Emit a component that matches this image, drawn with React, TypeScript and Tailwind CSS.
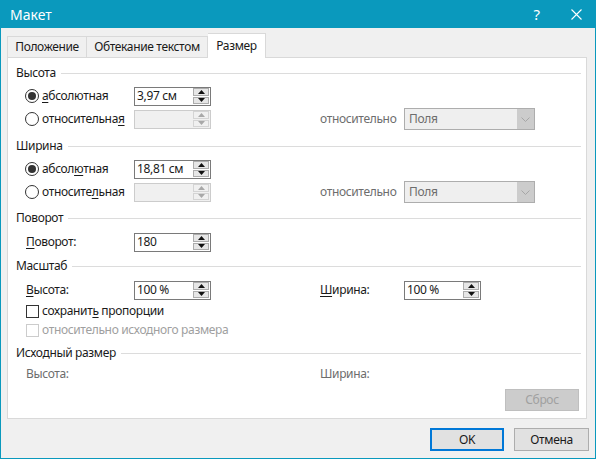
import React from "react";

const U = ({ children }: { children: React.ReactNode }) => (
  <span className="underline decoration-1 underline-offset-[2px]">{children}</span>
);

function Spin({ disabled = false }: { disabled?: boolean }) {
  const fill = disabled ? "#a8a8a8" : "#111";
  const btn = disabled
    ? "bg-[#f0f0f0] border-[#d4d4d4]"
    : "bg-[#e6e6e6] border-[#acacac]";
  return (
    <div className="flex flex-col w-[16px] h-[16px] gap-px">
      <div className={`flex-1 flex items-center justify-center border ${btn}`}>
        <svg width="7" height="4" viewBox="0 0 7 4">
          <path d="M0 4 L3.5 0 L7 4 Z" fill={fill} />
        </svg>
      </div>
      <div className={`flex-1 flex items-center justify-center border ${btn}`}>
        <svg width="7" height="4" viewBox="0 0 7 4">
          <path d="M0 0 L3.5 4 L7 0 Z" fill={fill} />
        </svg>
      </div>
    </div>
  );
}

function NumInput({ value, disabled = false }: { value?: string; disabled?: boolean }) {
  return (
    <div
      className={`flex items-center w-[77px] h-[19px] border pl-[2px] pr-px ${
        disabled ? "border-[#cccccc] bg-[#f0f0f0]" : "border-[#7a7a7a] bg-white"
      }`}
    >
      <span className="flex-1 leading-none">{value}</span>
      <Spin disabled={disabled} />
    </div>
  );
}

function Dropdown() {
  return (
    <div className="flex w-[131px] h-[22px] border border-[#adadad] bg-[#efefef]">
      <span className="flex-1 pl-[4px] leading-[20px] text-[#6d6d6d]">Поля</span>
      <div className="w-[17px] bg-[#cccccc] flex items-center justify-center">
        <svg width="9" height="5" viewBox="0 0 9 5">
          <path d="M0.5 0.5 L4.5 4.5 L8.5 0.5" fill="none" stroke="#a6a6a6" strokeWidth="1" />
        </svg>
      </div>
    </div>
  );
}

function Radio({ checked = false }: { checked?: boolean }) {
  return (
    <div className="w-[14px] h-[14px] rounded-full border border-[#333] bg-white flex items-center justify-center">
      {checked && <div className="w-[8px] h-[8px] rounded-full bg-[#333]" />}
    </div>
  );
}

function Check({ disabled = false }: { disabled?: boolean }) {
  return (
    <div
      className={`w-[13px] h-[13px] border bg-white ${disabled ? "border-[#cccccc]" : "border-[#333]"}`}
    />
  );
}

function Header({ title, mt }: { title: string; mt: string }) {
  return (
    <div className={`flex items-center h-[20px] gap-[5px] ${mt}`}>
      <span>{title}</span>
      <div className="flex-1 h-px bg-[#dcdcdc]" />
    </div>
  );
}

function RadioRow({
  checked,
  label,
  value,
  disabled,
  relative,
  mt,
}: {
  checked?: boolean;
  label: React.ReactNode;
  value?: string;
  disabled?: boolean;
  relative?: boolean;
  mt: string;
}) {
  return (
    <div className={`flex items-center h-[20px] pl-[9px] ${mt}`}>
      <div className="flex items-center gap-[3px] w-[109px]">
        <Radio checked={checked} />
        <span>{label}</span>
      </div>
      <NumInput value={value} disabled={disabled} />
      {relative && (
        <>
          <span className="ml-[109px] w-[84px] text-[#6d6d6d]">относительно</span>
          <Dropdown />
        </>
      )}
    </div>
  );
}

export default function App() {
  return (
    <div className="w-[596px] h-[459px] bg-[#0a99bd] flex flex-col font-['Noto_Sans',sans-serif] text-[12px] tracking-[-0.35px] text-[#1a1a1a] select-none">
      {/* title bar */}
      <div className="h-[28px] flex items-center pl-[10px] pr-[14px] text-white tracking-normal">
        <span className="text-[14px] flex-1">Макет</span>
        <span className="text-[15px] mr-[31px]">?</span>
        <svg width="11" height="11" viewBox="0 0 11 11">
          <path d="M0.5 0.5 L10.5 10.5 M10.5 0.5 L0.5 10.5" stroke="#fff" strokeWidth="1.1" />
        </svg>
      </div>

      <div className="flex-1 mx-px mb-px bg-[#f0f0f0] flex flex-col pt-[5px] pl-[6px] pr-[8px]">
        {/* tabs */}
        <div className="flex items-end h-[24px]">
          <div className="w-[80px] h-[21px] border border-b-0 border-[#d9d9d9] flex items-center justify-center">
            Положение
          </div>
          <div className="w-[121px] h-[21px] border border-l-0 border-b-0 border-[#d9d9d9] flex items-center justify-center">
            Обтекание текстом
          </div>
          <div className="relative z-10 -mb-px w-[58px] h-[25px] border border-l-0 border-b-0 border-[#d9d9d9] bg-white flex items-center justify-center pb-[1px]">
            Размер
          </div>
        </div>

        {/* panel */}
        <div className="h-[362px] border border-[#d9d9d9] bg-white pl-[8px] pr-[5px] pt-[5px] flex flex-col">
          <Header title="Высота" mt="mt-0" />
          <RadioRow checked label={<><U>а</U>бсолютная</>} value="3,97 см" mt="mt-[3px]" />
          <RadioRow label={<>относительна<U>я</U></>} disabled relative mt="mt-[3px]" />

          <Header title="Ширина" mt="mt-[7px]" />
          <RadioRow checked label={<>абсол<U>ю</U>тная</>} value="18,81 см" mt="mt-[3px]" />
          <RadioRow label={<>относите<U>л</U>ьная</>} disabled relative mt="mt-[3px]" />

          <Header title="Поворот" mt="mt-[6px]" />
          <div className="flex items-center h-[20px] pl-[10px] mt-[4px]">
            <span className="w-[108px]">
              <U>П</U>оворот:
            </span>
            <NumInput value="180" />
          </div>

          <Header title="Масштаб" mt="mt-[4px]" />
          <div className="flex items-center h-[20px] pl-[10px] mt-[4px]">
            <span className="w-[108px]">
              <U>В</U>ысота:
            </span>
            <NumInput value="100 %" />
            <span className="ml-[109px] w-[84px]">
              <U>Ш</U>ирина:
            </span>
            <NumInput value="100 %" />
          </div>
          <div className="flex items-center gap-[3px] h-[18px] pl-[10px] mt-[2px]">
            <Check />
            <span>
              сохранит<U>ь</U> пропорции
            </span>
          </div>
          <div className="flex items-center gap-[3px] h-[18px] pl-[10px] mt-px">
            <Check disabled />
            <span className="text-[#a0a0a0]">относительно исходного размера</span>
          </div>

          <Header title="Исходный размер" mt="mt-[4px]" />
          <div className="flex items-center h-[20px] pl-[10px] mt-px text-[#6d6d6d]">
            <span className="w-[294px]">Высота:</span>
            <span>Ширина:</span>
          </div>
          <div className="flex justify-end pr-[2px] mt-[5px]">
            <div className="w-[74px] h-[22px] bg-[#cccccc] border border-[#bfbfbf] flex items-center justify-center text-[#a0a0a0]">
              Сброс
            </div>
          </div>
        </div>

        {/* buttons */}
        <div className="flex justify-end gap-[10px] mt-[9px] mr-[-2px]">
          <div className="w-[74px] h-[23px] bg-[#e1e1e1] border-2 border-[#0078d7] flex items-center justify-center">
            OK
          </div>
          <div className="w-[75px] h-[23px] bg-[#e1e1e1] border border-[#adadad] flex items-center justify-center">
            Отмена
          </div>
        </div>
      </div>
    </div>
  );
}
